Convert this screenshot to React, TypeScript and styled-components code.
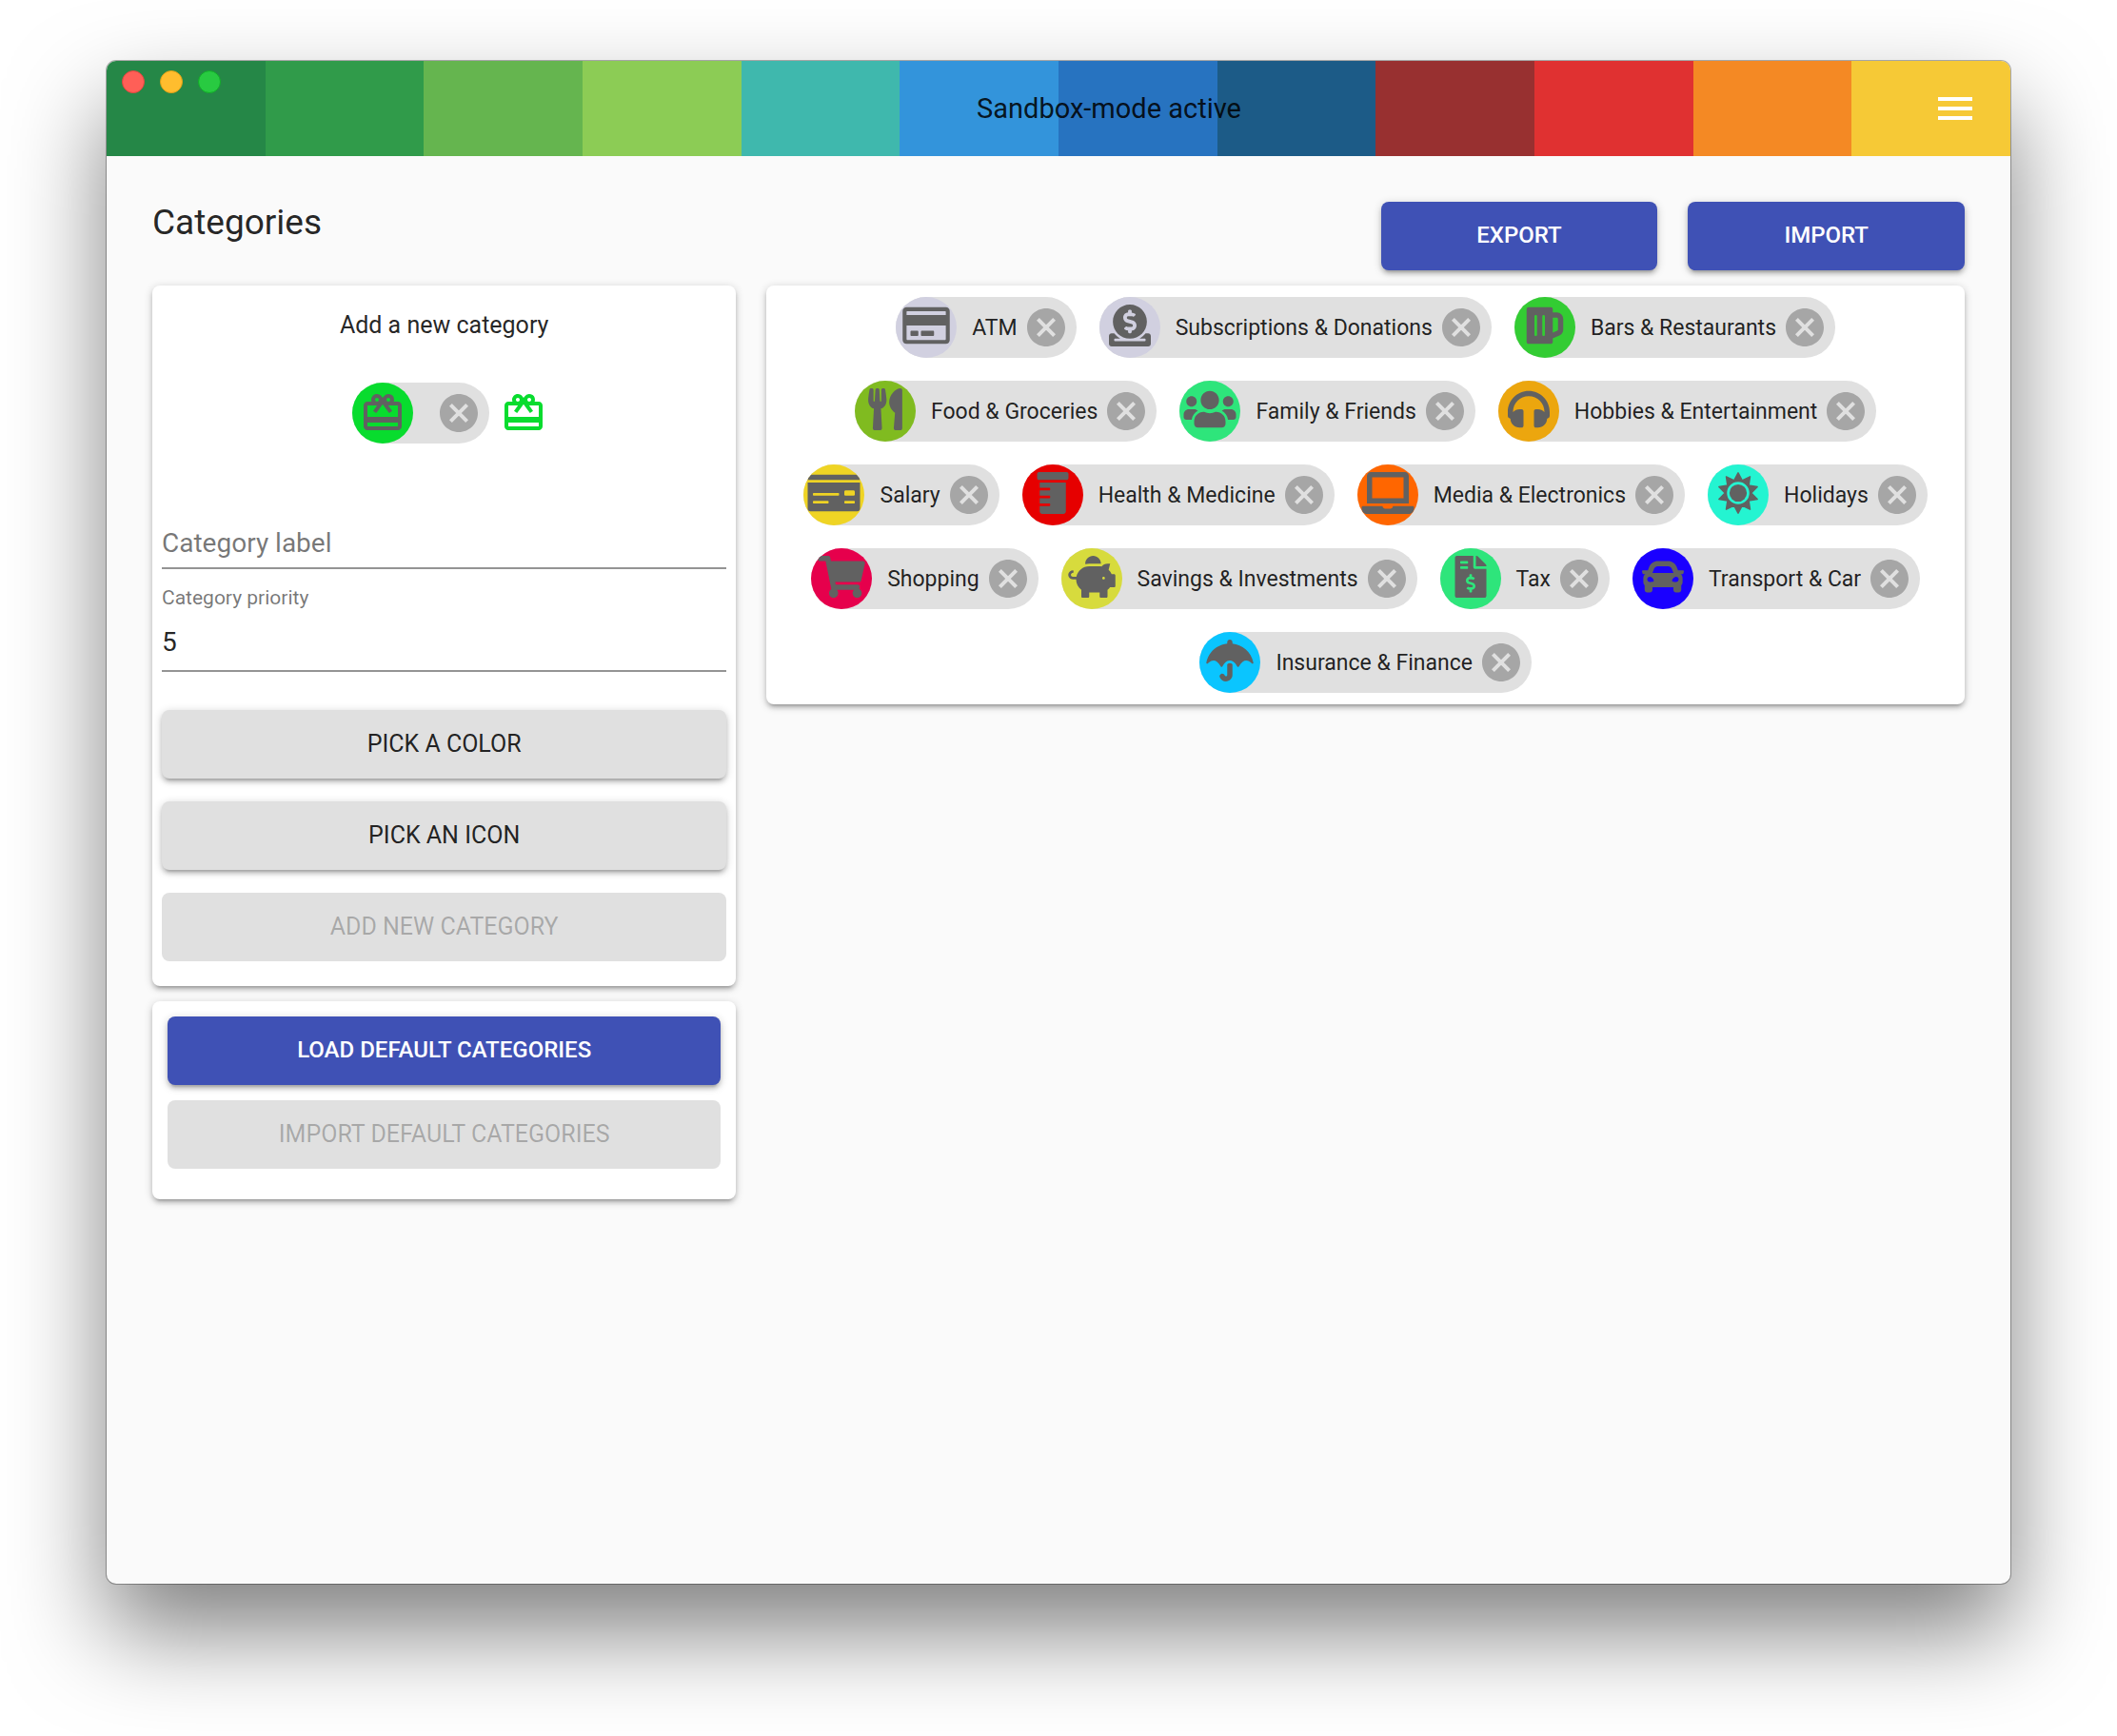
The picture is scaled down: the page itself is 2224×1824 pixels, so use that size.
import React from 'react';
import styled, { createGlobalStyle } from 'styled-components';
import {
  FaBeer,
  FaCar,
  FaDonate,
  FaFileInvoiceDollar,
  FaHeadphones,
  FaLaptop,
  FaMoneyCheck,
  FaPiggyBank,
  FaPrescriptionBottle,
  FaRegCreditCard,
  FaShoppingCart,
  FaUmbrella,
  FaUsers,
  FaUtensils,
} from 'react-icons/fa';
import { MdCancel, MdMenu, MdRedeem } from 'react-icons/md';

const stripes = [
  '#258747', '#309b4a', '#65b54f', '#8ccc55', '#3fb8ad', '#3394db',
  '#2773c0', '#1c5b87', '#983030', '#e03131', '#f48924', '#f6c936',
];

const stripeGradient = stripes
  .map((c, i) => `${c} ${(i * 100) / stripes.length}% ${((i + 1) * 100) / stripes.length}%`)
  .join(', ');

const raised = `0 2px 10px rgba(0, 0, 0, 0.2), 0 4px 4px rgba(0, 0, 0, 0.14), 0 6px 2px -4px rgba(0, 0, 0, 0.12)`;

const GlobalStyle = createGlobalStyle`
  *, *::before, *::after { box-sizing: border-box; }
  body {
    margin: 0;
    background: #fff;
    color: rgba(0, 0, 0, 0.87);
    font-family: Roboto, "Liberation Sans", sans-serif;
  }
  button, input { font-family: inherit; }
`;

const Desktop = styled.div`
  display: flex;
  min-height: 100vh;
  padding: 64px 112px 160px;
`;

const AppWindow = styled.div`
  flex: 1;
  min-width: 0;
  border-radius: 10px;
  overflow: hidden;
  background: #fafafa;
  box-shadow: 0 0 0 1px rgba(0, 0, 0, 0.3), 0 50px 100px rgba(0, 0, 0, 0.5);
`;

const TopBar = styled.header`
  display: flex;
  align-items: center;
  height: 100px;
  padding: 0 10px 0 16px;
  background: linear-gradient(to right, ${stripeGradient});
`;

const WindowControls = styled.div`
  display: flex;
  gap: 16px;
  align-self: flex-start;
  padding-top: 10px;
`;

const WindowButton = styled.button<{ $fill: string; $edge: string }>`
  width: 24px;
  height: 24px;
  padding: 0;
  border: 1px solid ${(p) => p.$edge};
  border-radius: 50%;
  background: ${(p) => p.$fill};
`;

const ModeLabel = styled.div`
  flex: 1;
  padding-left: 92px;
  color: rgba(0, 0, 0, 0.87);
  font-size: 29px;
  line-height: 40px;
  text-align: center;
`;

const MenuButton = styled.button`
  display: flex;
  padding: 24px;
  border: 0;
  background: none;
  color: #fff;
  font-size: 48px;
`;

const Content = styled.main`
  display: grid;
  grid-template-columns: repeat(12, 1fr);
  align-items: start;
  gap: 16px 32px;
  padding: 48px;
`;

const PageTitle = styled.h1`
  grid-column: span 8;
  margin: 0;
  font-size: 37px;
  font-weight: 400;
  line-height: 44px;
`;

const HeaderAction = styled.div`
  grid-column: span 2;
`;

const SideColumn = styled.div`
  grid-column: span 4;
  display: flex;
  flex-direction: column;
  gap: 16px;
`;

const Card = styled.section`
  border-radius: 8px;
  background: #fff;
  box-shadow: ${raised};
`;

const FormCard = styled(Card)`
  display: flex;
  flex-direction: column;
  padding: 24px 10px 26px;
`;

const DefaultsCard = styled(Card)`
  display: flex;
  flex-direction: column;
  gap: 16px;
  padding: 16px 16px 32px;
`;

const ChipCard = styled(Card)`
  grid-column: span 8;
  display: flex;
  flex-wrap: wrap;
  justify-content: center;
  gap: 24px;
  padding: 12px;
`;

const FormTitle = styled.h2`
  margin: 0;
  font-size: 25px;
  font-weight: 400;
  line-height: 36px;
  text-align: center;
`;

const Preview = styled.div`
  display: flex;
  justify-content: center;
  align-items: center;
  gap: 12px;
  padding: 42px 0 68px 10px;
`;

const PreviewIcon = styled.span`
  display: flex;
  color: #08dc2e;
  font-size: 48px;
`;

const Field = styled.div`
  display: flex;
  flex-direction: column;
  margin-bottom: 16px;
`;

const FieldLabel = styled.label`
  color: rgba(0, 0, 0, 0.54);
  font-size: 21px;
  line-height: 28px;
`;

const TextInput = styled.input`
  width: 100%;
  height: 64px;
  padding: 2px 0 0;
  border: 0;
  border-bottom: 2px solid #949494;
  background: none;
  color: rgba(0, 0, 0, 0.87);
  font-size: 28px;
  outline: 0;

  &::placeholder {
    color: rgba(0, 0, 0, 0.54);
    opacity: 1;
  }
  &:placeholder-shown {
    padding-top: 10px;
  }
`;

const FormActions = styled.div`
  display: flex;
  flex-direction: column;
  gap: 24px;
  padding-top: 24px;
`;

const Button = styled.button<{ $primary?: boolean }>`
  width: 100%;
  height: 72px;
  padding: 0 16px 2px;
  border: 0;
  border-radius: 8px;
  background: ${(p) => (p.$primary ? '#3f51b5' : '#e0e0e0')};
  box-shadow: ${raised};
  color: ${(p) => (p.$primary ? '#fff' : 'rgba(0, 0, 0, 0.87)')};
  font-size: ${(p) => (p.$primary ? 24 : 25)}px;
  font-weight: ${(p) => (p.$primary ? 500 : 400)};
  text-transform: uppercase;

  &:disabled {
    box-shadow: none;
    color: rgba(0, 0, 0, 0.26);
  }
`;

const ChipBox = styled.div`
  display: flex;
  align-items: center;
  height: 64px;
  padding-right: 8px;
  border-radius: 32px;
  background: #e0e0e0;
`;

const ChipLabel = styled.span`
  padding: 2px 22px 0 16px;
  font-size: 23px;
  line-height: 32px;
  white-space: nowrap;

  &:empty {
    padding-right: 24px;
  }
`;

/* The glyph box is wider than it is tall so that wide icons keep their full height. */
const Avatar = styled.span<{ $color: string; $glyph?: boolean }>`
  display: flex;
  align-items: center;
  justify-content: center;
  width: 64px;
  height: 64px;
  padding-bottom: ${(p) => (p.$glyph ? 4 : 0)}px;
  border-radius: 50%;
  overflow: hidden;
  background: ${(p) => p.$color};
  color: #616161;

  svg {
    flex: none;
    width: ${(p) => (p.$glyph ? 56 : 48)}px;
    height: ${(p) => (p.$glyph ? 44 : 48)}px;
  }
`;

const RemoveButton = styled.button`
  display: flex;
  margin-left: -16px;
  padding: 0;
  border: 0;
  background: none;
  color: rgba(0, 0, 0, 0.26);
  font-size: 48px;
`;

const sunPoints = Array.from({ length: 20 }, (_, i) => {
  const radius = i % 2 === 0 ? 246 : 160;
  const angle = (i * Math.PI) / 10;
  return `${Math.round(256 + radius * Math.sin(angle))} ${Math.round(256 - radius * Math.cos(angle))}`;
}).join('L');

/* Ten-pointed sun with an open ring around its disc. */
function SunIcon() {
  return (
    <svg viewBox="0 0 512 512" fill="currentColor" aria-hidden="true">
      <path
        d={`M${sunPoints}ZM256 110a146 146 0 1 0 0 292a146 146 0 1 0 0-292Z`}
        fillRule="evenodd"
        stroke="currentColor"
        strokeWidth="18"
        strokeLinejoin="round"
      />
      <circle cx="256" cy="256" r="106" />
    </svg>
  );
}

interface Category {
  label: string;
  color: string;
  icon: React.ComponentType;
}

const categories: Category[] = [
  { label: 'ATM', color: '#d1d0e0', icon: FaRegCreditCard },
  { label: 'Subscriptions & Donations', color: '#d1d0e0', icon: FaDonate },
  { label: 'Bars & Restaurants', color: '#33cc33', icon: FaBeer },
  { label: 'Food & Groceries', color: '#80bb20', icon: FaUtensils },
  { label: 'Family & Friends', color: '#2ee57b', icon: FaUsers },
  { label: 'Hobbies & Entertainment', color: '#eca60e', icon: FaHeadphones },
  { label: 'Salary', color: '#efd424', icon: FaMoneyCheck },
  { label: 'Health & Medicine', color: '#e60000', icon: FaPrescriptionBottle },
  { label: 'Media & Electronics', color: '#ff6600', icon: FaLaptop },
  { label: 'Holidays', color: '#24f4d1', icon: SunIcon },
  { label: 'Shopping', color: '#e6004c', icon: FaShoppingCart },
  { label: 'Savings & Investments', color: '#d7db3d', icon: FaPiggyBank },
  { label: 'Tax', color: '#2ee57b', icon: FaFileInvoiceDollar },
  { label: 'Transport & Car', color: '#1a00ff', icon: FaCar },
  { label: 'Insurance & Finance', color: '#0ac5ff', icon: FaUmbrella },
];

function Chip({ label, color, icon: Icon, glyph }: Category & { glyph?: boolean }) {
  return (
    <ChipBox>
      <Avatar $color={color} $glyph={glyph}>
        <Icon />
      </Avatar>
      <ChipLabel>{label}</ChipLabel>
      <RemoveButton type="button" aria-label={`Remove ${label}`.trim()}>
        <MdCancel />
      </RemoveButton>
    </ChipBox>
  );
}

export default function App() {
  return (
    <>
      <GlobalStyle />
      <Desktop>
        <AppWindow>
          <TopBar>
            <WindowControls>
              <WindowButton type="button" aria-label="Close" $fill="#ff5f57" $edge="#e2463f" />
              <WindowButton type="button" aria-label="Minimize" $fill="#ffbd2e" $edge="#e1a116" />
              <WindowButton type="button" aria-label="Zoom" $fill="#28ca41" $edge="#12ac28" />
            </WindowControls>
            <ModeLabel>Sandbox-mode active</ModeLabel>
            <MenuButton type="button" aria-label="Menu">
              <MdMenu />
            </MenuButton>
          </TopBar>
          <Content>
            <PageTitle>Categories</PageTitle>
            <HeaderAction>
              <Button type="button" $primary>Export</Button>
            </HeaderAction>
            <HeaderAction>
              <Button type="button" $primary>Import</Button>
            </HeaderAction>
            <SideColumn>
              <FormCard>
                <FormTitle>Add a new category</FormTitle>
                <Preview>
                  <Chip label="" color="#08dc2e" icon={MdRedeem} />
                  <PreviewIcon>
                    <MdRedeem />
                  </PreviewIcon>
                </Preview>
                <Field>
                  <TextInput type="text" aria-label="Category label" placeholder="Category label" />
                </Field>
                <Field>
                  <FieldLabel htmlFor="priority">Category priority</FieldLabel>
                  <TextInput id="priority" type="text" inputMode="numeric" defaultValue="5" />
                </Field>
                <FormActions>
                  <Button type="button">Pick a color</Button>
                  <Button type="button">Pick an icon</Button>
                  <Button type="button" disabled>Add new category</Button>
                </FormActions>
              </FormCard>
              <DefaultsCard>
                <Button type="button" $primary>Load default categories</Button>
                <Button type="button" disabled>Import default categories</Button>
              </DefaultsCard>
            </SideColumn>
            <ChipCard>
              {categories.map((c) => (
                <Chip key={c.label} {...c} glyph />
              ))}
            </ChipCard>
          </Content>
        </AppWindow>
      </Desktop>
    </>
  );
}
